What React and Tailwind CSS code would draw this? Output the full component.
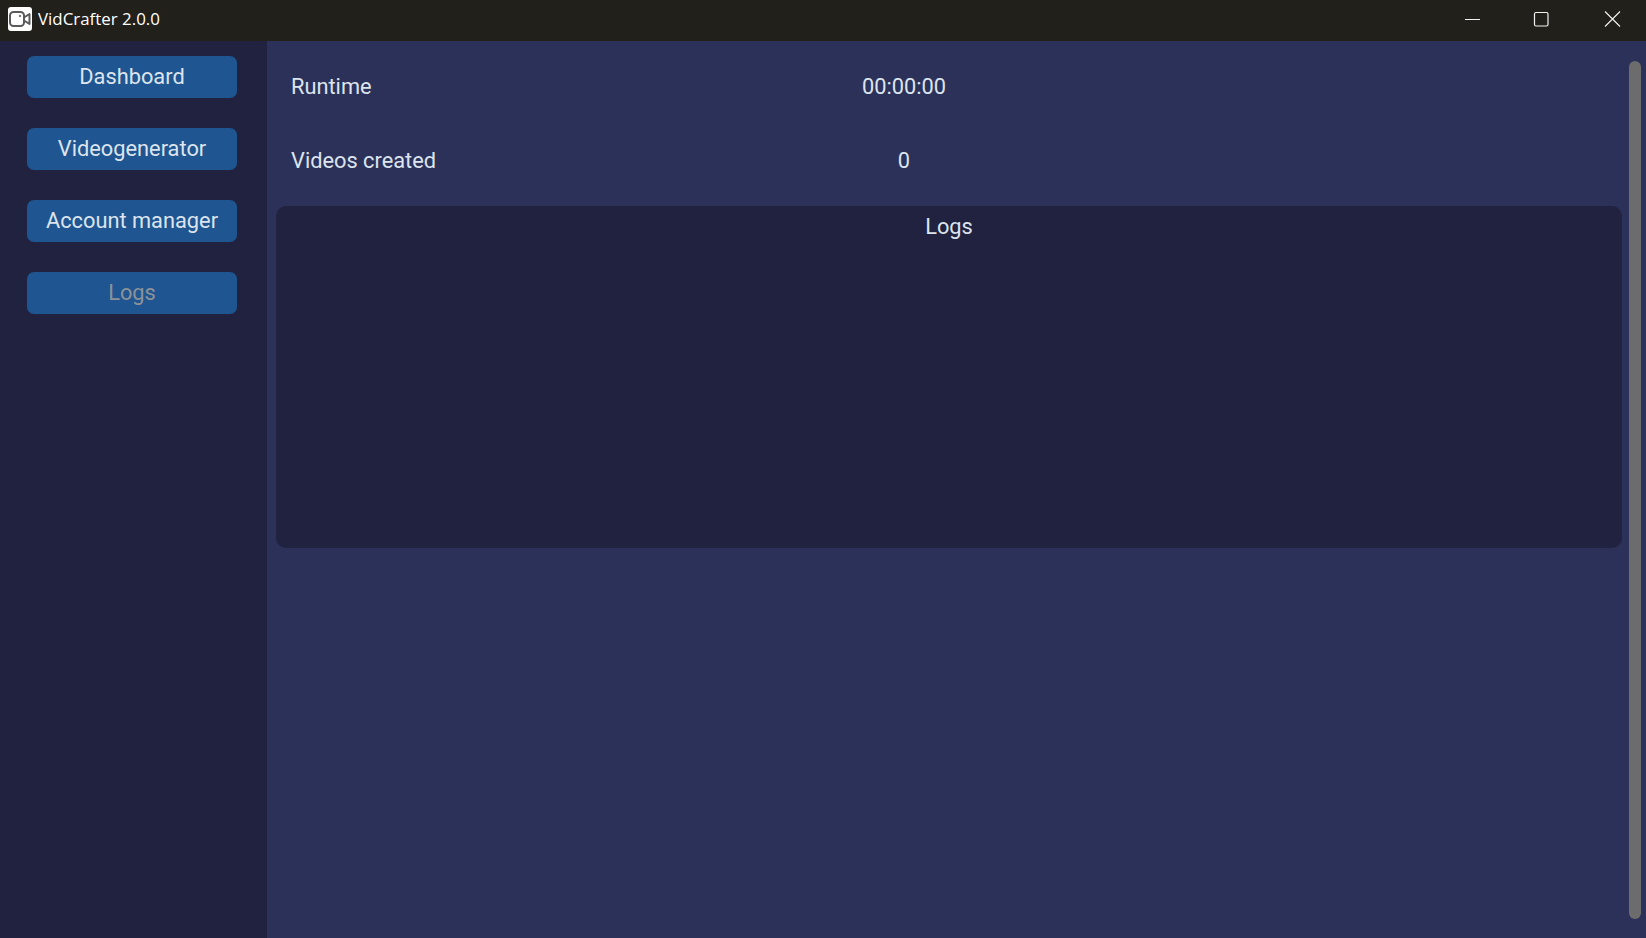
const navItems = [
  { label: "Dashboard" },
  { label: "Videogenerator" },
  { label: "Account manager" },
  { label: "Logs", disabled: true },
];

const stats = [
  { label: "Runtime", value: "00:00:00" },
  { label: "Videos created", value: "0" },
];

function AppIcon() {
  return (
    <div className="flex h-6 w-6 items-center justify-center rounded-[3px] bg-white">
      <svg width="22" height="16" viewBox="0 0 22 16" fill="none" stroke="#5a5a5a" strokeWidth="2">
        <rect x="1" y="1" width="14" height="14" rx="3.5" />
        <path d="M15 6.5 20.5 3v10L15 9.5" strokeLinejoin="round" />
        <circle cx="11" cy="5" r="0.8" strokeWidth="1" />
      </svg>
    </div>
  );
}

function TitleBar() {
  return (
    <header className="flex h-[41px] shrink-0 items-center bg-[#22201a] pb-[3px] pl-2 text-white">
      <AppIcon />
      <span className="ml-[6px] font-['Open_Sans',sans-serif] text-[16.9px]">VidCrafter 2.0.0</span>
      <div className="ml-auto flex items-center">
        <svg width="70" height="16" viewBox="0 0 70 16" stroke="#f2f2f2" strokeWidth="1" fill="none">
          <path d="M28 8.5h15" />
        </svg>
        <svg width="70" height="16" viewBox="0 0 70 16" stroke="#f2f2f2" strokeWidth="1.2" fill="none">
          <rect x="27.5" y="1.5" width="13.5" height="13.5" rx="1.5" />
        </svg>
        <svg width="70" height="16" viewBox="0 0 70 16" stroke="#f2f2f2" strokeWidth="1.1" fill="none" className="mr-[-1px]">
          <path d="M28 .5l15 15M43 .5l-15 15" />
        </svg>
      </div>
    </header>
  );
}

function Sidebar() {
  return (
    <aside className="flex w-[267px] shrink-0 flex-col items-center gap-[30px] bg-[#20223f] pt-[15px] pr-[3px]">
      {navItems.map((item) => (
        <button
          key={item.label}
          type="button"
          disabled={item.disabled}
          className={`h-[42px] w-[210px] rounded-[7px] bg-[#1f5590] text-[21.8px] ${item.disabled ? "text-[#8d9299]" : "text-[#dce4ee]"}`}
        >
          {item.label}
        </button>
      ))}
    </aside>
  );
}

export default function App() {
  return (
    <div className="flex h-[938px] w-[1646px] flex-col overflow-hidden bg-[#2c3159] font-['Roboto',sans-serif] text-[#dce4ee]">
      <TitleBar />
      <div className="flex min-h-0 flex-1">
        <Sidebar />
        <main className="flex min-w-0 flex-1">
          <div className="w-[1355px] shrink-0 pt-[9px] pl-[9px] text-[21.8px]">
            {stats.map((row) => (
              <div key={row.label} className="flex h-[74px] items-center">
                <span className="w-[578px] shrink-0 pl-[15px]">{row.label}</span>
                <span className="w-[100px] text-center">{row.value}</span>
              </div>
            ))}
            <section className="mt-[8px] h-[342px] rounded-[10px] bg-[#20223f] pt-[5px] text-center">
              Logs
            </section>
          </div>
          <div className="ml-[7px] mt-[20px] h-[858px] w-[12px] rounded-full bg-[#6c6c6c]" />
        </main>
      </div>
    </div>
  );
}
